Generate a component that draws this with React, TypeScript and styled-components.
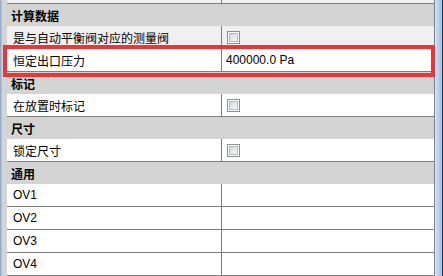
import styled, { createGlobalStyle } from "styled-components";

const GlobalStyle = createGlobalStyle`
    html, body {
        margin: 0;
        padding: 0;
        background: #ffffff;
    }
    body {
        font-family: "Liberation Sans", "Noto Sans CJK SC", sans-serif;
        font-size: 12px;
        color: #000000;
    }
`;

const LINE = "#7f7f7f";
const CATEGORY = "#d4d4d4";

type Prop = { name: string; value?: string; check?: boolean; muted?: boolean; highlight?: boolean };
type Category = { title: string; props: Prop[] };

const categories: Category[] = [
    {
        title: "计算数据",
        props: [
            { name: "是与自动平衡阀对应的测量阀", check: true, muted: true },
            { name: "恒定出口压力", value: "400000.0 Pa", highlight: true },
        ],
    },
    { title: "标记", props: [{ name: "在放置时标记", check: true }] },
    { title: "尺寸", props: [{ name: "锁定尺寸", check: true }] },
    {
        title: "通用",
        props: [{ name: "OV1" }, { name: "OV2" }, { name: "OV3" }, { name: "OV4" }],
    },
];

export default function App() {
    return (
        <>
            <GlobalStyle />
            <Frame>
                <LeftEdge />
                <Grid>
                    <Row $height={4}>
                        <Margin />
                        <NameCell $muted />
                        <ValueCell $muted />
                    </Row>
                    {categories.map(cat => (
                        <div key={cat.title}>
                            <CategoryRow>{cat.title}</CategoryRow>
                            {cat.props.map(p => (
                                <Row key={p.name} $height={23}>
                                    <Margin />
                                    <NameCell $muted={p.muted}>{p.name}</NameCell>
                                    <ValueCell $muted={p.muted}>
                                        {p.check && <CheckBox />}
                                        {p.value}
                                    </ValueCell>
                                    {p.highlight && <Highlight />}
                                </Row>
                            ))}
                        </div>
                    ))}
                </Grid>
                <ScrollBar />
                <DarkEdge />
            </Frame>
        </>
    );
}

const Frame = styled.div`
    display: flex;
    width: 443px;
    height: 276px;
    overflow: hidden;
`;

const LeftEdge = styled.div`
    width: 3px;
    flex-shrink: 0;
    background: linear-gradient(90deg, #8ea2bd, #b6c6da 60%, #d9e2ec);
`;

const Grid = styled.div`
    width: 431px;
    flex-shrink: 0;
    display: flex;
    flex-direction: column;
    border-right: 1px solid ${LINE};
    background: #ffffff;
`;

const Row = styled.div<{ $height: number }>`
    display: flex;
    height: ${p => p.$height}px;
    flex-shrink: 0;
    position: relative;
`;

const Margin = styled.div`
    width: 4px;
    flex-shrink: 0;
    background: ${CATEGORY};
`;

const NameCell = styled.div<{ $muted?: boolean }>`
    width: 215px;
    flex-shrink: 0;
    box-sizing: border-box;
    display: flex;
    align-items: center;
    padding-left: 6px;
    white-space: nowrap;
    background: ${p => (p.$muted ? "#f0f0f0" : "#ffffff")};
    border-right: 1px solid ${LINE};
    border-bottom: 1px solid ${LINE};
`;

const ValueCell = styled.div<{ $muted?: boolean }>`
    width: 212px;
    flex-shrink: 0;
    box-sizing: border-box;
    display: flex;
    align-items: center;
    padding-left: 4px;
    white-space: nowrap;
    background: ${p => (p.$muted ? "#f0f0f0" : "#ffffff")};
    border-bottom: 1px solid ${LINE};
`;

const CategoryRow = styled.div`
    height: 22px;
    display: flex;
    align-items: center;
    padding-left: 8px;
    background: ${CATEGORY};
    font-weight: bold;
    color: #000000;
`;

const CheckBox = styled.span`
    width: 13px;
    height: 13px;
    margin-left: 1px;
    box-sizing: border-box;
    border: 1px solid #8e8f8f;
    background: #ffffff;
    padding: 1px;
    display: inline-flex;

    &::after {
        content: "";
        flex: 1;
        border: 1px solid #b4b9bf;
        background: linear-gradient(135deg, #d3d8de, #f8f9fa);
    }
`;

const Highlight = styled.div`
    position: absolute;
    left: 0;
    right: -1px;
    top: -4px;
    bottom: -5px;
    border: 4px solid #e5383b;
    pointer-events: none;
    z-index: 1;
`;

const ScrollBar = styled.div`
    width: 7px;
    flex-shrink: 0;
    box-sizing: border-box;
    border-left: 1px solid #dbe7f5;
    background: linear-gradient(90deg, #c7ddf6, #aecbef 60%, #9fc0ea);
`;

const DarkEdge = styled.div`
    width: 1px;
    flex-shrink: 0;
    background: #2c3440;
`;
